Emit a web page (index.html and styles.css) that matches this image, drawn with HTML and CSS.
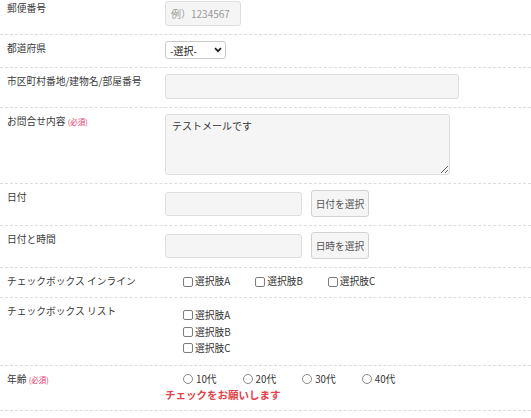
FILE: index.html
```html
<!DOCTYPE html>
<html lang="ja">
<head>
<meta charset="utf-8">
<title>フォーム</title>
<link rel="stylesheet" href="styles.css">
</head>
<body>
<div class="form">
  <div class="row">
    <div class="label">郵便番号</div>
    <div class="field"><input class="input zip" type="text" placeholder="例）1234567"></div>
  </div>
  <div class="row">
    <div class="label">都道府県</div>
    <div class="field">
      <span class="select-wrap">
        <select class="select"><option>-選択-</option></select>
        <svg class="chev" width="8" height="6" viewBox="0 0 8 6"><path d="M1 1.2 L4 4.2 L7 1.2" fill="none" stroke="#222" stroke-width="1.8"/></svg>
      </span>
    </div>
  </div>
  <div class="row">
    <div class="label">市区町村番地/建物名/部屋番号</div>
    <div class="field"><input class="input address" type="text"></div>
  </div>
  <div class="row">
    <div class="label">お問合せ内容 <span class="req">(必須)</span></div>
    <div class="field"><textarea class="textarea">テストメールです</textarea></div>
  </div>
  <div class="row">
    <div class="label">日付</div>
    <div class="field picker"><input class="input date" type="text"><button class="btn" type="button">日付を選択</button></div>
  </div>
  <div class="row">
    <div class="label">日付と時間</div>
    <div class="field picker"><input class="input date" type="text"><button class="btn" type="button">日時を選択</button></div>
  </div>
  <div class="row">
    <div class="label">チェックボックス インライン</div>
    <div class="field">
      <div class="inline">
        <label class="opt"><input class="cb" type="checkbox">選択肢A</label>
        <label class="opt"><input class="cb" type="checkbox">選択肢B</label>
        <label class="opt"><input class="cb" type="checkbox">選択肢C</label>
      </div>
    </div>
  </div>
  <div class="row">
    <div class="label">チェックボックス リスト</div>
    <div class="field">
      <div class="list">
        <label class="opt"><input class="cb" type="checkbox">選択肢A</label>
        <label class="opt"><input class="cb" type="checkbox">選択肢B</label>
        <label class="opt"><input class="cb" type="checkbox">選択肢C</label>
      </div>
    </div>
  </div>
  <div class="row">
    <div class="label">年齢 <span class="req">(必須)</span></div>
    <div class="field">
      <div class="inline radios">
        <label class="opt"><input class="rd" type="radio" name="age">10代</label>
        <label class="opt"><input class="rd" type="radio" name="age">20代</label>
        <label class="opt"><input class="rd" type="radio" name="age">30代</label>
        <label class="opt"><input class="rd" type="radio" name="age">40代</label>
      </div>
      <div class="error">チェックをお願いします</div>
    </div>
  </div>
</div>
</body>
</html>
```

FILE: styles.css
```css
html, body {
  margin: 0;
  padding: 0;
  background: #fff;
}
body {
  font-family: "Noto Sans CJK JP", "Noto Sans", sans-serif;
  font-size: 10px;
  color: #333;
  overflow: hidden;
}
.form {
  margin-top: -5px;
}
.row {
  display: grid;
  grid-template-columns: 165px 1fr;
  align-items: start;
  padding: 6px 0 8px;
  border-bottom: 1px dashed #dcdcdc;
}
.label {
  padding-left: 7px;
  font-size: 9.75px;
  line-height: 15px;
  color: #3a3a3a;
}
.req {
  font-size: 7.5px;
  color: #e8336c;
}
.field {
  line-height: 15px;
}
.input {
  display: block;
  box-sizing: border-box;
  height: 25px;
  margin: 0;
  padding: 0 5px;
  border: 1px solid #dedede;
  border-radius: 3px;
  background: #f5f5f5;
  font-family: inherit;
  font-size: 10px;
  color: #333;
  outline: none;
}
.input::placeholder {
  color: #9a9a9a;
}
.zip { width: 76px; }
.address { width: 294px; }
.date { width: 137px; height: 24px; }
.select-wrap {
  position: relative;
  display: block;
  width: 61px;
}
.select {
  display: block;
  appearance: none;
  -webkit-appearance: none;
  box-sizing: border-box;
  width: 61px;
  height: 18px;
  margin: 0;
  padding: 0 0 0 4px;
  border: 1px solid #c9c9c9;
  border-radius: 3px;
  background: #fff;
  font-family: inherit;
  font-size: 10px;
  color: #222;
  outline: none;
}
.chev {
  position: absolute;
  right: 4px;
  top: 6px;
  pointer-events: none;
}
.textarea {
  display: block;
  box-sizing: border-box;
  width: 285px;
  height: 61px;
  margin: 0;
  padding: 3px 6px;
  border: 1px solid #dedede;
  border-radius: 3px;
  background: #f5f5f5;
  font-family: inherit;
  font-size: 10px;
  line-height: 15px;
  color: #333;
  outline: none;
}
.picker {
  display: flex;
  align-items: center;
  gap: 9px;
}
.btn {
  box-sizing: border-box;
  height: 27px;
  width: 58px;
  margin: 0;
  padding: 0;
  border: 1px solid #d2d2d2;
  border-radius: 3px;
  background: #f5f5f5;
  font-family: inherit;
  font-size: 9.75px;
  color: #555;
}
.inline {
  display: flex;
  padding-left: 18px;
  gap: 25px;
}
.radios {
  gap: 26px;
}
.list {
  display: flex;
  flex-direction: column;
  padding-left: 18px;
  padding-top: 3px;
}
.list .opt {
  line-height: 16.5px;
}
.opt {
  display: flex;
  align-items: center;
  gap: 2px;
  font-size: 9.75px;
  color: #333;
}
.cb {
  appearance: none;
  -webkit-appearance: none;
  box-sizing: border-box;
  width: 10px;
  height: 10px;
  margin: 0;
  border: 1px solid #7c7c7c;
  border-radius: 2px;
  background: #fff;
}
.rd {
  appearance: none;
  -webkit-appearance: none;
  box-sizing: border-box;
  width: 10px;
  height: 10px;
  margin: 0 1px 0 0;
  border: 1px solid #8a8a8a;
  border-radius: 50%;
  background: #fff;
}
.error {
  font-size: 10.5px;
  font-weight: bold;
  color: #e0434c;
  line-height: 15px;
}
```
